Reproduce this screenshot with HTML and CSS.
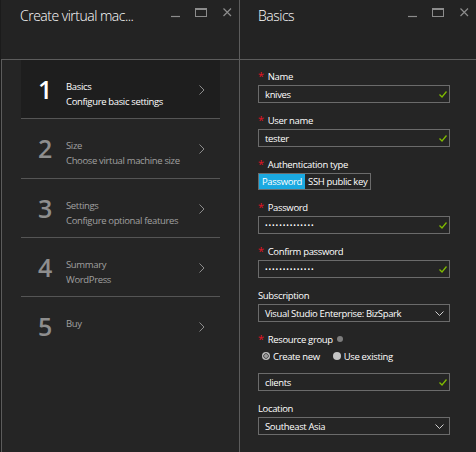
FILE: index.html
```html
<!DOCTYPE html>
<html lang="en">

<head>
  <meta charset="UTF-8" />
  <meta name="viewport" content="width=device-width, initial-scale=1.0" />
  <title>Create virtual machine</title>
  <link rel="stylesheet" href="styles.css">
</head>

<body>
  <div class="portal">
    <section class="blade blade-steps">
      <header class="blade-head">
        <h1>Create virtual mac...</h1>
        <div class="blade-ctrls">
          <svg viewBox="0 0 12 12"><path d="M1 10.5h9" /></svg>
          <svg viewBox="0 0 12 12"><rect x="0.5" y="2.5" width="11" height="8" /><path d="M0.5 3.5h11" /></svg>
          <svg viewBox="0 0 12 12"><path d="M2.5 2.5l7.5 7.5M10 2.5l-7.5 7.5" /></svg>
        </div>
      </header>
      <div class="blade-body">
        <ul class="steps">
          <li class="step active">
            <span class="step-num">1</span>
            <div class="step-text">
              <div>Basics</div>
              <div>Configure basic settings</div>
            </div>
            <svg class="chev" viewBox="0 0 6 10"><path d="M0.5 0.5l4.5 4.5-4.5 4.5" /></svg>
          </li>
          <li class="step">
            <span class="step-num">2</span>
            <div class="step-text">
              <div>Size</div>
              <div>Choose virtual machine size</div>
            </div>
            <svg class="chev" viewBox="0 0 6 10"><path d="M0.5 0.5l4.5 4.5-4.5 4.5" /></svg>
          </li>
          <li class="step">
            <span class="step-num">3</span>
            <div class="step-text">
              <div>Settings</div>
              <div>Configure optional features</div>
            </div>
            <svg class="chev" viewBox="0 0 6 10"><path d="M0.5 0.5l4.5 4.5-4.5 4.5" /></svg>
          </li>
          <li class="step">
            <span class="step-num">4</span>
            <div class="step-text">
              <div>Summary</div>
              <div>WordPress</div>
            </div>
            <svg class="chev" viewBox="0 0 6 10"><path d="M0.5 0.5l4.5 4.5-4.5 4.5" /></svg>
          </li>
          <li class="step last">
            <span class="step-num">5</span>
            <div class="step-text">
              <div>Buy</div>
            </div>
            <svg class="chev" viewBox="0 0 6 10"><path d="M0.5 0.5l4.5 4.5-4.5 4.5" /></svg>
          </li>
        </ul>
      </div>
    </section>

    <section class="blade blade-form">
      <header class="blade-head">
        <h1>Basics</h1>
        <div class="blade-ctrls">
          <svg viewBox="0 0 12 12"><path d="M1 10.5h9" /></svg>
          <svg viewBox="0 0 12 12"><rect x="0.5" y="2.5" width="11" height="8" /><path d="M0.5 3.5h11" /></svg>
          <svg viewBox="0 0 12 12"><path d="M2.5 2.5l7.5 7.5M10 2.5l-7.5 7.5" /></svg>
        </div>
      </header>
      <div class="blade-body form">
        <div class="field">
          <label><span class="req">*</span>Name</label>
          <div class="input">knives<svg class="ok" viewBox="0 0 8 7"><path d="M0.5 3.5l2.5 2.5 4.5-5.5" /></svg></div>
        </div>
        <div class="field">
          <label><span class="req">*</span>User name</label>
          <div class="input">tester<svg class="ok" viewBox="0 0 8 7"><path d="M0.5 3.5l2.5 2.5 4.5-5.5" /></svg></div>
        </div>
        <div class="field">
          <label><span class="req">*</span>Authentication type</label>
          <div class="toggle">
            <span class="on">Password</span>
            <span>SSH public key</span>
          </div>
        </div>
        <div class="field">
          <label><span class="req">*</span>Password</label>
          <div class="input"><span class="dots">••••••••••••••</span><svg class="ok" viewBox="0 0 8 7"><path d="M0.5 3.5l2.5 2.5 4.5-5.5" /></svg></div>
        </div>
        <div class="field">
          <label><span class="req">*</span>Confirm password</label>
          <div class="input"><span class="dots">••••••••••••••</span><svg class="ok" viewBox="0 0 8 7"><path d="M0.5 3.5l2.5 2.5 4.5-5.5" /></svg></div>
        </div>
        <div class="field">
          <label>Subscription</label>
          <div class="input select">Visual Studio Enterprise: BizSpark<svg class="down" viewBox="0 0 9 5"><path d="M0.5 0.5l4 4 4-4" /></svg></div>
        </div>
        <div class="field">
          <label><span class="req">*</span>Resource group<span class="info"></span></label>
          <div class="radios">
            <span class="radio checked">Create new</span>
            <span class="radio">Use existing</span>
          </div>
          <div class="input">clients<svg class="ok" viewBox="0 0 8 7"><path d="M0.5 3.5l2.5 2.5 4.5-5.5" /></svg></div>
        </div>
        <div class="field">
          <label>Location</label>
          <div class="input select">Southeast Asia<svg class="down" viewBox="0 0 9 5"><path d="M0.5 0.5l4 4 4-4" /></svg></div>
        </div>
      </div>
    </section>
  </div>
</body>

</html>
```

FILE: styles.css
```css
* {
  box-sizing: border-box;
}

body {
  margin: 0;
  background-color: #1b1b1b;
  font-family: "Open Sans", "Noto Sans", sans-serif;
  color: #fff;
}

.portal {
  display: flex;
  height: 452px;
  padding-left: 1px;
}

.blade {
  display: flex;
  flex-direction: column;
  background-color: #252525;
}

.blade-steps {
  width: 239px;
  border-right: 1px solid #5c5c5c;
}

.blade-form {
  flex: 1;
}

.blade-head {
  display: flex;
  height: 60px;
  padding: 6px 6px 0 19px;
  background-color: #232323;
  border-bottom: 1px solid #5c5c5c;
}

.blade-form .blade-head {
  padding-left: 18px;
}

.blade-head h1 {
  flex: 1;
  margin: 0;
  font-size: 14px;
  font-weight: 300;
  letter-spacing: -0.5px;
  line-height: 20px;
}

.blade-ctrls {
  display: flex;
  gap: 13px;
}

.blade-ctrls svg {
  width: 12px;
  height: 12px;
  fill: none;
  stroke: #8c8c8c;
  stroke-width: 1;
}

.blade-ctrls svg:last-child {
  margin-left: 1px;
}

.blade-ctrls path:only-child {
  stroke-width: 1.2;
}

.blade-body {
  flex: 1;
}

.blade-steps .blade-body {
  border-left: 1px solid #5c5c5c;
}

/* steps list */
.steps {
  list-style: none;
  margin: 0 19px 0 19px;
  padding: 0;
}

.step {
  display: flex;
  align-items: flex-start;
  height: 59.33px;
  border-bottom: 1px solid #555;
  color: #a0a0a0;
}

.step.last {
  border-bottom: none;
}

.step.active {
  background-color: #1e1e1e;
  color: #fff;
}

.step-num {
  width: 45px;
  padding-left: 17px;
  font-size: 25px;
  font-weight: 600;
  line-height: 59px;
  color: #8e8e8e;
}

.step.active .step-num {
  color: #fff;
}

.step-text {
  flex: 1;
  padding-top: 19px;
  font-size: 9.5px;
  letter-spacing: -0.35px;
  line-height: 15px;
}

.chev {
  width: 6px;
  height: 10px;
  margin: 25px 15px 0 0;
  fill: none;
  stroke: #8c8c8c;
  stroke-width: 1;
}

/* form */
.form {
  padding: 8px 26px 0 18px;
  font-size: 9.5px;
  letter-spacing: -0.35px;
}

.field {
  margin-bottom: 9px;
}

.field label {
  display: flex;
  align-items: center;
  height: 16px;
  margin-bottom: 1px;
}

.req {
  color: #e81123;
  margin-right: 4px;
  font-size: 11px;
  line-height: 1;
  position: relative;
  top: -1px;
}

.input {
  display: flex;
  align-items: center;
  height: 18px;
  padding: 0 2px 0 6px;
  border: 1px solid #6b6b6b;
}

.dots {
  font-size: 7px;
  letter-spacing: 0.9px;
}

.ok {
  width: 8px;
  height: 7px;
  margin-left: auto;
  fill: none;
  stroke: #7fba00;
  stroke-width: 1.3;
}

.down {
  width: 9px;
  height: 5px;
  margin-left: auto;
  margin-right: 3px;
  fill: none;
  stroke: #d0d0d0;
  stroke-width: 1;
}

.toggle {
  display: inline-flex;
  height: 17px;
  border: 1px solid #6b6b6b;
  line-height: 15px;
}

.toggle span {
  padding: 0 3px;
}

.toggle .on {
  background-color: #1ba9e1;
}

.info {
  display: inline-block;
  width: 6px;
  height: 6px;
  margin-left: 4px;
  border-radius: 50%;
  background-color: #7d7d7d;
}

.radios {
  display: flex;
  gap: 13px;
  height: 16px;
  margin: 1px 0 9px 4px;
  align-items: center;
}

.radio {
  display: flex;
  align-items: center;
  gap: 3px;
}

.radio::before {
  content: "";
  width: 8px;
  height: 8px;
  border-radius: 50%;
  background-color: #c4c4c4;
}

.radio.checked::before {
  background: radial-gradient(circle, #9a9a9a 0 1.5px, #555 2px 2.5px, #bdbdbd 3px);
}
```
